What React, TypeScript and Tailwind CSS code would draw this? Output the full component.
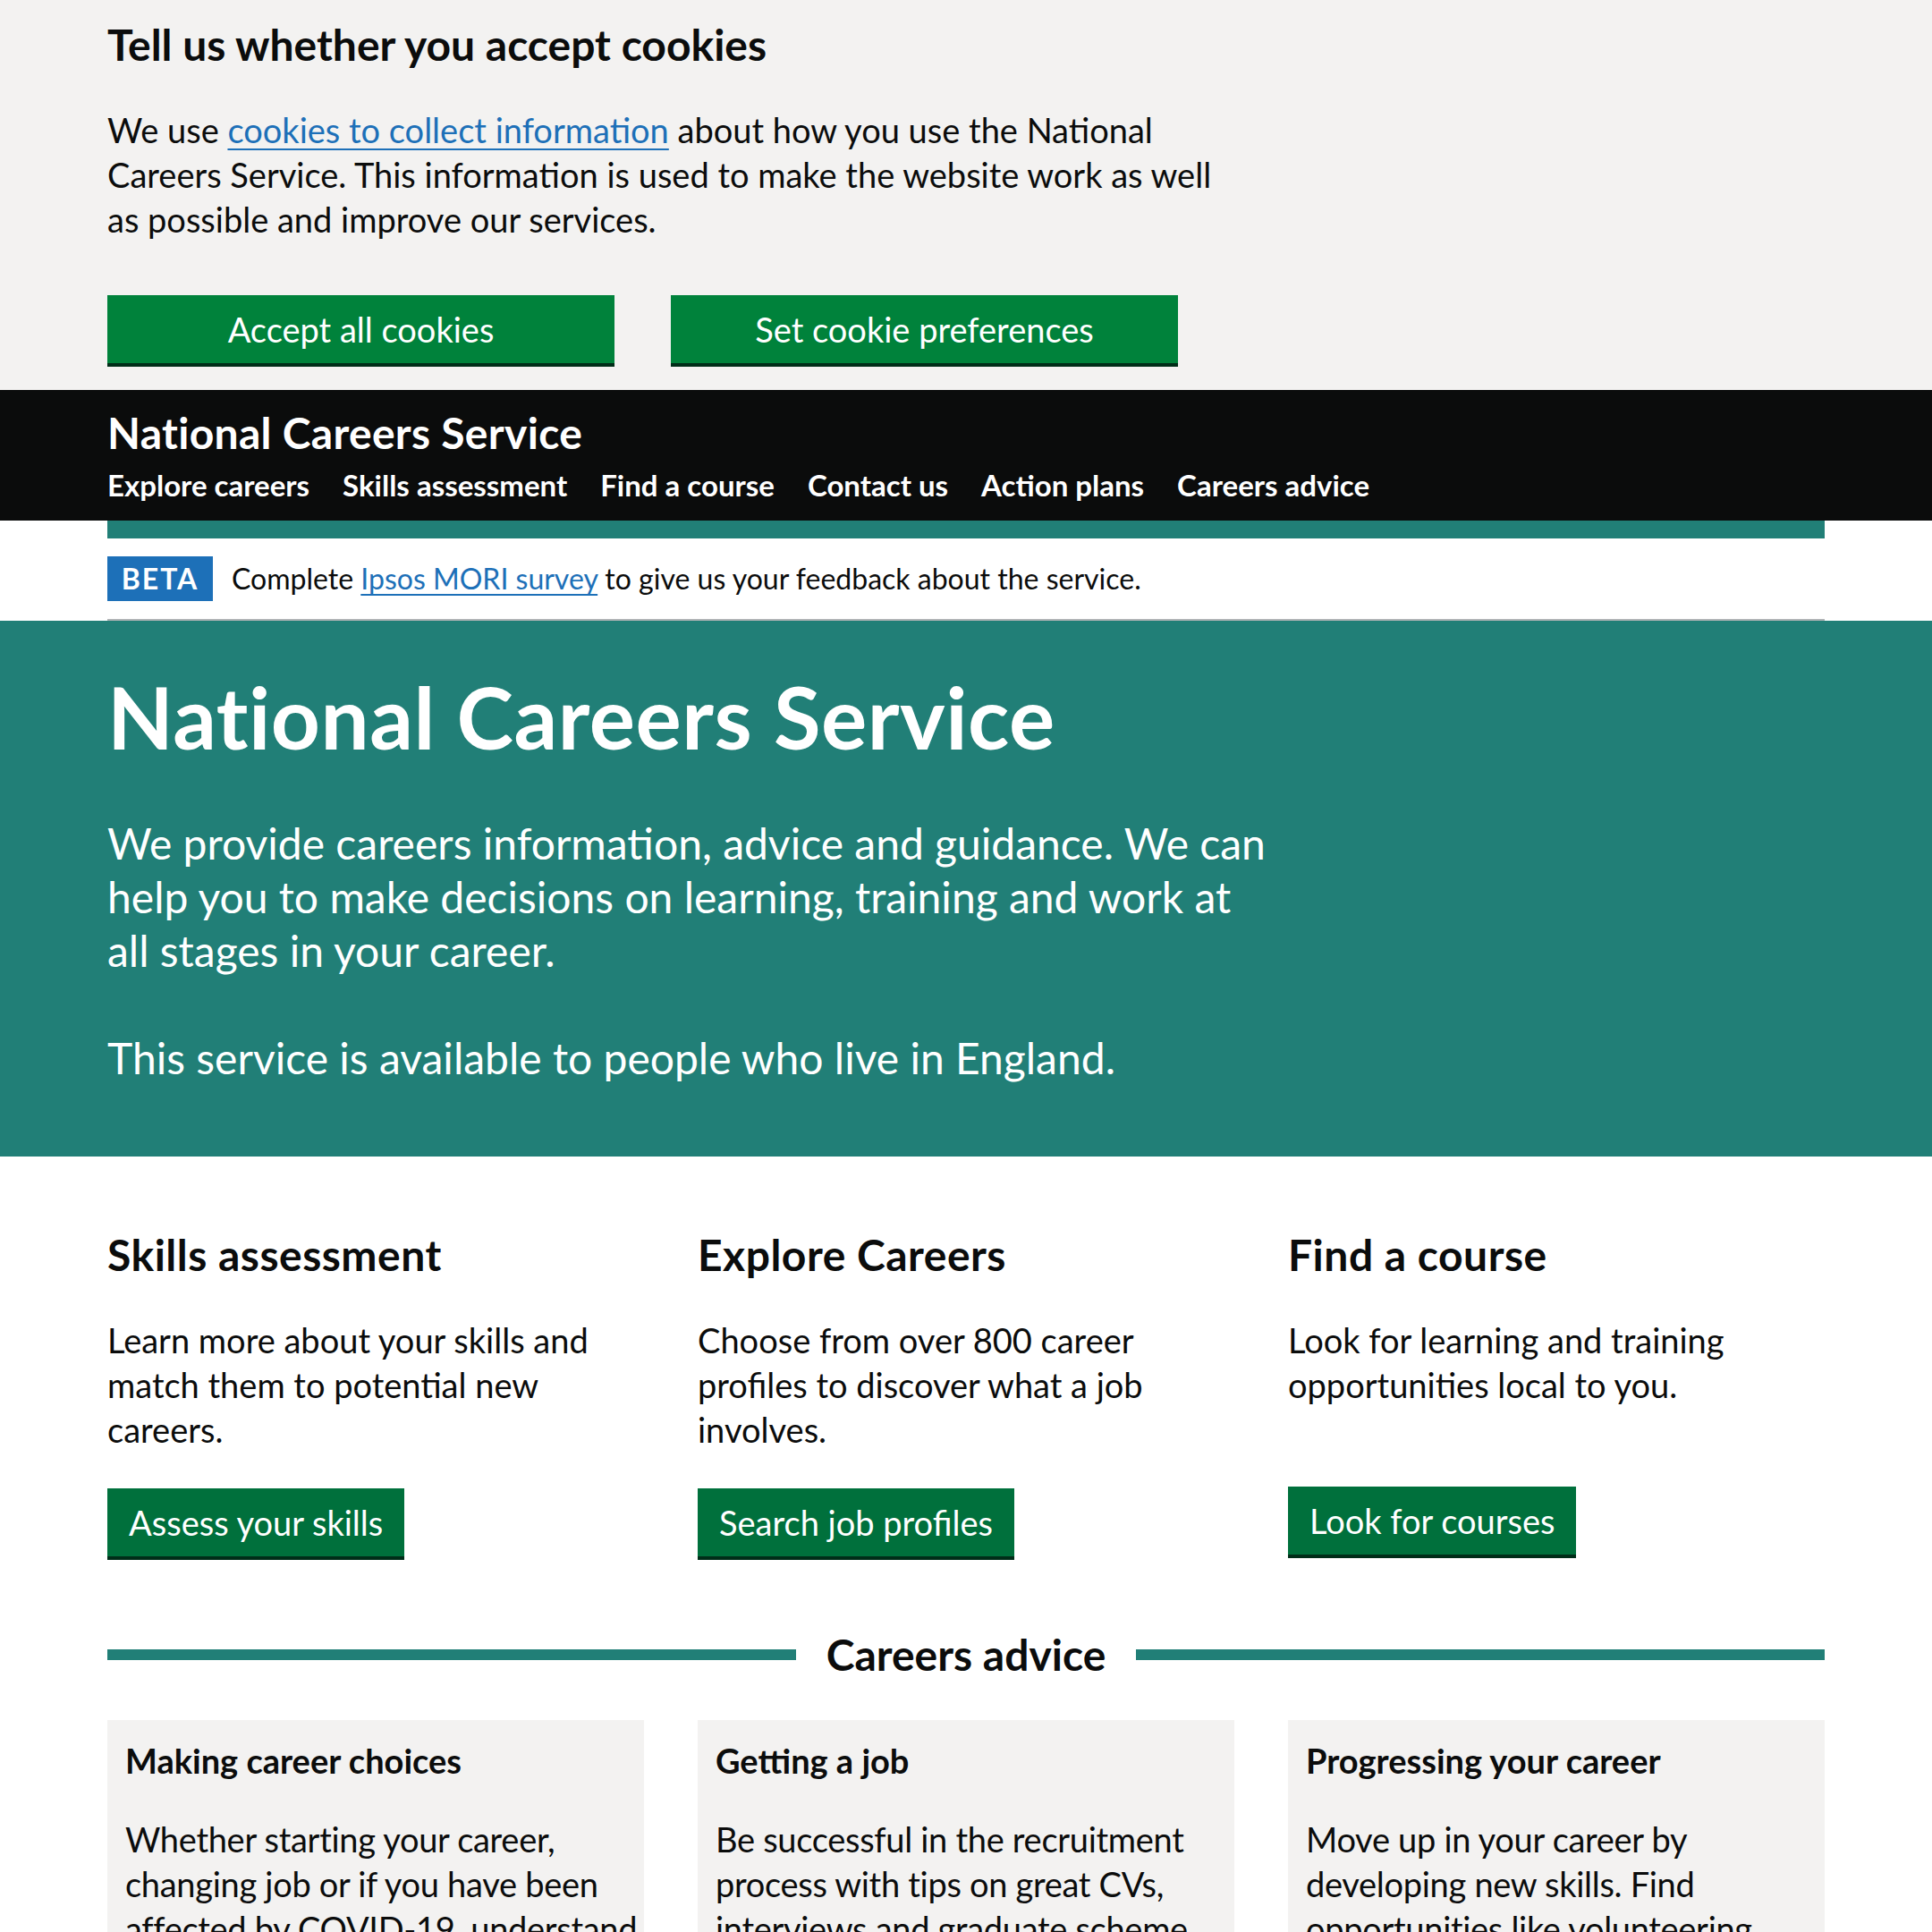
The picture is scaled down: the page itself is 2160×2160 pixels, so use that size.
import React from "react";

const TEAL = "bg-[#217f77]";

function GreenButton({
  children,
  className = "",
}: {
  children: React.ReactNode;
  className?: string;
}) {
  return (
    <a
      href="#"
      className={
        "inline-flex items-center justify-center h-[76px] border-2 border-transparent px-[22px] text-[38px] leading-[38px] text-white shadow-[0_4px_0_#002d18] " +
        className
      }
    >
      {children}
    </a>
  );
}

function Container({
  children,
  className = "",
}: {
  children: React.ReactNode;
  className?: string;
}) {
  return <div className={"w-[1920px] ml-[120px] " + className}>{children}</div>;
}

const navItems = [
  "Explore careers",
  "Skills assessment",
  "Find a course",
  "Contact us",
  "Action plans",
  "Careers advice",
];

const tools = [
  {
    title: "Skills assessment",
    text: "Learn more about your skills and match them to potential new careers.",
    button: "Assess your skills",
    extra: "",
  },
  {
    title: "Explore Careers",
    text: "Choose from over 800 career profiles to discover what a job involves.",
    button: "Search job profiles",
    extra: "",
  },
  {
    title: "Find a course",
    text: "Look for learning and training opportunities local to you.",
    button: "Look for courses",
    extra: "mb-[2px]",
  },
];

const cards = [
  {
    title: "Making career choices",
    text: "Whether starting your career, changing job or if you have been affected by COVID-19, understand your options and plan your next steps.",
  },
  {
    title: "Getting a job",
    text: "Be successful in the recruitment process with tips on great CVs, interviews and graduate scheme applications.",
  },
  {
    title: "Progressing your career",
    text: "Move up in your career by developing new skills. Find opportunities like volunteering, apprenticeships and further training.",
  },
];

export default function App() {
  return (
    <div className="h-[2160px] overflow-hidden bg-white text-[#0b0c0c] font-['Lato',sans-serif]">
      {/* Cookie banner */}
      <div className="bg-[#f3f2f1] pt-[20px] pb-[30px]">
        <Container>
          <h2 className="text-[48px] leading-[60px] font-bold mb-[40px]">
            Tell us whether you accept cookies
          </h2>
          <p className="text-[38px] leading-[50px] max-w-[1250px]">
            We use{" "}
            <a
              href="#"
              className="text-[#1d70b8] underline decoration-[2px] underline-offset-[6px]"
            >
              cookies to collect information
            </a>{" "}
            about how you use the National Careers Service. This information is
            used to make the website work as well as possible and improve our
            services.
          </p>
          <div className="flex gap-[63px] mt-[60px]">
            <GreenButton className="w-[567px] bg-[#00823b]">
              Accept all cookies
            </GreenButton>
            <GreenButton className="w-[567px] bg-[#00823b]">
              Set cookie preferences
            </GreenButton>
          </div>
        </Container>
      </div>

      {/* Header */}
      <header className="bg-[#0b0c0c]">
        <Container className="pt-[18px] pb-[20px]">
          <div className="text-[48px] leading-[60px] font-bold text-white tracking-[0.3px]">
            National Careers Service
          </div>
          <nav className="mt-[8px] flex gap-x-[37px] text-[33px] leading-[40px] font-bold text-white">
            {navItems.map((n) => (
              <a key={n} href="#">
                {n}
              </a>
            ))}
          </nav>
        </Container>
      </header>
      <Container className={"h-[20px] " + TEAL}>
        <span />
      </Container>

      {/* Phase banner */}
      <Container className="py-[20px] border-b-2 border-[#b1b4b6] flex items-center">
        <span className="flex items-center justify-center w-[118px] h-[50px] bg-[#1d70b8] text-white font-bold text-[32px] tracking-[2px] mr-[21px]">
          BETA
        </span>
        <span className="text-[32px] leading-[40px]">
          Complete{" "}
          <a
            href="#"
            className="text-[#1d70b8] underline decoration-[2px] underline-offset-[5px]"
          >
            Ipsos MORI survey
          </a>{" "}
          to give us your feedback about the service.
        </span>
      </Container>

      {/* Hero */}
      <div className={TEAL + " pt-[57px] pb-[80px] text-white"}>
        <Container>
          <h1 className="text-[96px] leading-[100px] font-bold mb-[62px] tracking-[0.5px]">
            National Careers Service
          </h1>
          <p className="text-[48px] leading-[60px] max-w-[1302px] mb-[60px]">
            We provide careers information, advice and guidance. We can help you
            to make decisions on learning, training and work at all stages in
            your career.
          </p>
          <p className="text-[48px] leading-[60px] max-w-[1302px]">
            This service is available to people who live in England.
          </p>
        </Container>
      </div>

      {/* Tools */}
      <Container className="pt-[80px] grid grid-cols-3 gap-x-[60px]">
        {tools.map((t) => (
          <div key={t.title} className="flex flex-col">
            <h2 className="text-[48px] leading-[60px] font-bold mb-[40px] tracking-[0.5px]">
              {t.title}
            </h2>
            <p className="text-[38px] leading-[50px]">{t.text}</p>
            <div className={"mt-auto pt-[41px] flex " + t.extra}>
              <GreenButton className="bg-[#00703c]">{t.button}</GreenButton>
            </div>
          </div>
        ))}
      </Container>

      {/* Careers advice */}
      <Container className="mt-[80px] flex items-center gap-[34px]">
        <div className={"flex-1 h-[12px] " + TEAL} />
        <h2 className="text-[48px] leading-[60px] font-bold">Careers advice</h2>
        <div className={"flex-1 h-[12px] " + TEAL} />
      </Container>

      <Container className="mt-[43px] grid grid-cols-3 gap-x-[60px]">
        {cards.map((c) => (
          <div
            key={c.title}
            className="bg-[#f3f2f1] pl-[20px] pr-0 pt-[20px] pb-[40px]"
          >
            <h3 className="text-[38px] leading-[50px] font-bold mb-[38px]">
              {c.title}
            </h3>
            <p className="text-[38px] leading-[50px] tracking-[-0.3px]">
              {c.text}
            </p>
          </div>
        ))}
      </Container>
    </div>
  );
}
